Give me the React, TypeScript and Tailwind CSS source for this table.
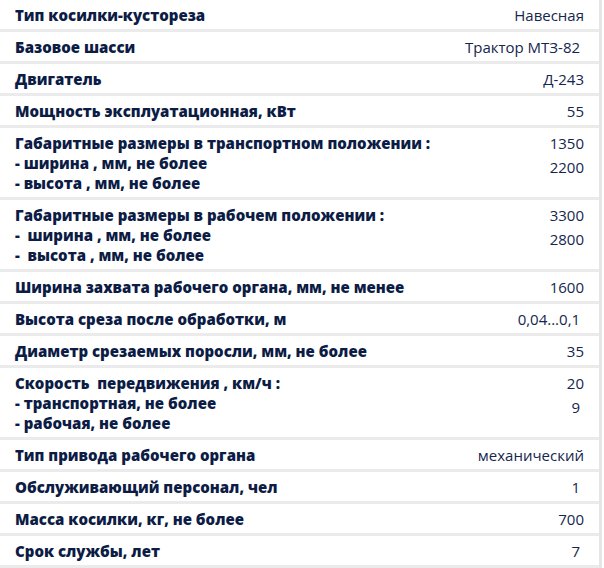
import React from "react";

type Row = { label: string[]; value: string[] };

const rows: Row[] = [
  { label: ["Тип косилки-кустореза"], value: ["Навесная"] },
  { label: ["Базовое шасси"], value: ["Трактор МТЗ-82\u00a0"] },
  { label: ["Двигатель"], value: ["Д-243"] },
  { label: ["Мощность эксплуатационная, кВт"], value: ["55"] },
  {
    label: [
      "Габаритные размеры в транспортном положении :",
      "- ширина , мм, не более",
      "- высота , мм, не более",
    ],
    value: ["1350", "2200"],
  },
  {
    label: [
      "Габаритные размеры в рабочем положении :",
      "-\u00a0 ширина , мм, не более",
      "-\u00a0 высота , мм, не более",
    ],
    value: ["3300", "2800"],
  },
  { label: ["Ширина захвата рабочего органа, мм, не менее"], value: ["1600"] },
  { label: ["Высота среза после обработки, м"], value: ["0,04...0,1\u00a0"] },
  { label: ["Диаметр срезаемых поросли, мм, не более"], value: ["35"] },
  {
    label: [
      "Скорость\u00a0 передвижения , км/ч :",
      "- транспортная, не более",
      "- рабочая, не более",
    ],
    value: ["20", "9\u00a0"],
  },
  { label: ["Тип привода рабочего органа"], value: ["механический"] },
  { label: ["Обслуживающий персонал, чел"], value: ["1\u00a0"] },
  { label: ["Масса косилки, кг, не более"], value: ["700"] },
  { label: ["Срок службы, лет"], value: ["7\u00a0"] },
];

export default function App() {
  return (
    <div className="w-[604px] h-[568px] bg-white overflow-hidden">
      <div
        className="w-[602px] border-r-[3px] border-[#e6e6e6]"
        style={{ fontFamily: '"Open Sans", "Noto Sans", sans-serif' }}
      >
        {rows.map((r, i) => (
          <div
            key={i}
            className="flex justify-between items-start border-b-[3px] border-[#ebebeb] pl-[15px] pr-[15px]"
          >
            <div className="pt-[5px] pb-[4px] text-[15px] leading-[20px] font-extrabold text-[#0c1c45]">
              {r.label.map((l, j) => (
                <div key={j} className="whitespace-pre">
                  {l}
                </div>
              ))}
            </div>
            <div className="pt-[3px] text-[15px] leading-[24px] text-right text-[#15264e]">
              {r.value.map((v, j) => (
                <div key={j} className="whitespace-pre">
                  {v}
                </div>
              ))}
            </div>
          </div>
        ))}
      </div>
    </div>
  );
}
